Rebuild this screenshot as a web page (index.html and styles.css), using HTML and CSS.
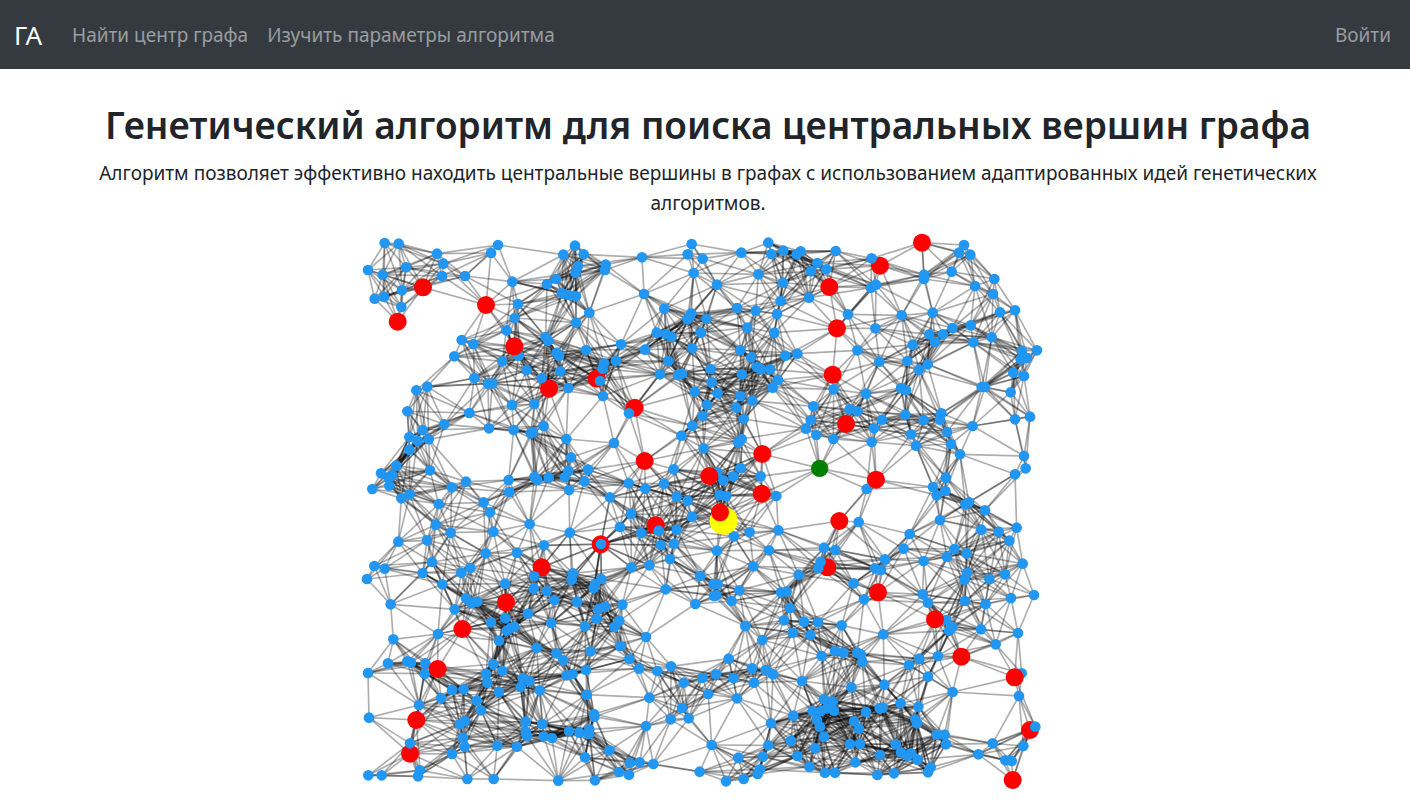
FILE: index.html
```html
<!DOCTYPE html>
<html lang="ru">
<head>
<meta charset="utf-8">
<meta name="viewport" content="width=device-width, initial-scale=1">
<title>Генетический алгоритм</title>
<link rel="stylesheet" href="styles.css">
</head>
<body>
<nav class="navbar">
  <a class="brand" href="#">ГА</a>
  <a class="nav-link" href="#">Найти центр графа</a>
  <a class="nav-link" href="#">Изучить параметры алгоритма</a>
  <a class="nav-link nav-login" href="#">Войти</a>
</nav>
<main class="intro">
  <h1 class="title">Генетический алгоритм для поиска центральных вершин графа</h1>
  <p class="lead">Алгоритм позволяет эффективно находить центральные вершины в графах с использованием адаптированных идей генетических алгоритмов.</p>
  <svg class="graph" id="graph" viewBox="0 0 2118 1680" role="img" aria-label="Граф"></svg>
</main>
<script src="graph.js"></script>
</body>
</html>
```
FILE: styles.css
```css
*, *::before, *::after { box-sizing: border-box; }
body {
  margin: 0;
  background: #fff;
  color: #212529;
  font-family: "Segoe UI", "Noto Sans", sans-serif;
  font-size: 19px;
  line-height: 30px;
}
.navbar {
  display: flex;
  align-items: center;
  gap: 19px;
  min-height: 69px;
  padding: 10px 19px 10px 14px;
  background: #343a40;
}
.brand {
  margin-right: 11px;
  color: #fff;
  font-size: 26px;
  text-decoration: none;
}
.nav-link {
  color: rgba(255, 255, 255, .5);
  text-decoration: none;
}
.nav-login { margin-left: auto; }
.intro {
  display: flex;
  flex-direction: column;
  align-items: center;
  max-width: 1236px;
  margin: 0 auto;
  padding: 32px 0 20px 6px;
  text-align: center;
}
.title {
  margin: 0 0 9px;
  font-size: 37px;
  font-weight: 600;
  line-height: 48px;
}
.lead { margin: 0; }
.graph {
  display: block;
  width: 100%;
  max-width: 706px;
  margin-top: 12px;
}
.edge {
  fill: none;
  stroke: #000;
  stroke-opacity: .32;
  stroke-width: 5;
}
.vertex { fill: #2196f3; }
.path { fill: #f00; }
.target { fill: #008000; }
.center { fill: #ff0; }
```
FILE: graph.js
```js
// Vertices by sector: [offset x, offset y, "x,y x,y ..."]
const sectors = [
  [0, 0, "89,39 131,41 246,71 265,101 153,112 261,138 330,138 39,120 83,134 141,181 87,200 59,206 139,231 429,45 408,69 472,155 489,222 479,264 454,301 491,377 320,330 355,342 298,379 442,394 515,420 560,444 358,444 399,461 412,460 217,470 184,481 157,544 343,549 471,525 538,522 640,474 616,424 605,368 612,378 572,321 580,332 663,278 703,248 576,162 603,147 621,190 641,195 663,199 669,108 662,128 686,73 625,74 660,47 693,360"],
  [705, 0, "47,104 45,120 156,82 162,192 223,236 305,42 293,73 338,86 311,129 381,164 454,68 535,38 544,72 580,62 632,64 620,73 682,99 663,124 505,133 579,158 657,203 572,213 561,252 441,234 497,242 553,308 472,293 350,267 304,250 292,268 299,260 333,308 307,355 200,308 228,312 245,321 235,393 165,359 93,343 78,392 42,400 38,416 30,453 39,498 210,433 264,434 276,431 362,417 365,457 314,485 383,490 351,525 338,558 117,550 451,360 484,382 456,433 501,411 512,417 540,418 564,450 548,473 451,498 487,512 439,533 586,377 622,371 670,529"],
  [1395, 0, "47,63 19,118 155,85 432,45 417,68 451,74 395,125 312,134 312,147 465,168 523,147 519,192 540,247 585,241 168,164 153,173 84,253 166,295 245,256 338,248 397,294 452,286 369,313 328,313 345,336 278,344 515,322 460,337 112,361 178,395 262,393 323,403 297,419 41,478 138,491 243,474 258,481 89,538 112,544 256,554 364,550 485,471 495,471 572,487 580,428 612,438 606,363 602,388 621,384 651,361"],
  [0, 555, "268,28 203,45 163,66 188,78 221,73 163,104 124,152 78,175 111,180 101,190 103,212 52,222 139,250 164,238 225,166 290,217 333,200 461,195 402,40 476,45 527,55 534,51 566,33 634,72 648,127 699,164 640,167 630,186 688,199 581,188 538,186 547,195 642,225 463,231 386,262 405,292 251,267 242,329 287,353 216,376 130,380 415,350 524,327 644,353 567,391 392,415 486,413 231,441 203,474 319,473 346,459 58,453 89,461 36,492 262,508 450,506 538,484 536,521 576,528 598,556 666,560 654,475 650,494 333,550 367,560"],
  [705, 555, "307,32 274,62 341,100 72,84 461,12 455,72 445,83 251,163 382,172 400,196 430,184 452,159 512,184 559,243 389,240 409,243 116,205 166,221 222,206 260,245 293,257 60,247 123,296 90,336 306,305 153,354 206,347 260,344 213,390 252,386 432,364 479,352 565,346 381,407 537,406 490,454 240,432 178,451 124,457 33,387 34,492 15,507 11,519 227,523 331,483 371,507 383,507 379,541 372,543 448,526 425,558 662,15 648,41 679,60 692,440 685,460 626,479 573,532 590,530"],
  [1395, 555, "162,40 40,72 155,81 186,14 311,15 360,14 273,58 288,92 381,51 393,87 458,33 420,118 585,13 630,5 612,123 617,160 585,178 378,188 339,216 350,241 376,228 436,268 447,262 495,286 140,222 116,321 360,315 269,357 251,401 195,433 12,398 46,405 165,460 183,465 311,438 381,426 403,402 440,415 484,344 536,350 590,338 568,377 608,446 555,478 508,492 441,474 434,494 101,505 132,553 308,538 435,558 573,549 642,540"],
  [0, 1110, "107,13 299,28 350,10 249,102 115,118 99,190 157,184 168,188 211,190 209,221 39,219 291,270 326,268 258,294 192,315 42,353 165,430 291,462 40,526 80,526 195,511 189,529 337,537 416,537 408,67 451,55 455,92 478,80 468,84 519,41 432,122 588,69 690,79 545,144 604,160 625,181 415,192 442,212 393,222 397,248 432,276 365,302 378,331 503,235 523,243 497,261 554,271 635,226 653,222 693,210 695,284 707,154 315,373 330,363 324,413 329,440 427,437 486,440 512,365 562,372 512,395 516,408 566,409 591,414 642,394 673,398 703,388 702,402 690,472 610,542"],
  [705, 1110, "97,14 45,20 26,27 20,56 88,62 73,81 91,138 168,111 118,177 147,206 202,213 243,199 281,248 337,234 378,223 430,234 416,176 486,205 492,248 527,210 549,223 466,78 517,120 355,282 441,295 276,324 296,355 242,358 178,293 168,378 12,342 13,350 58,451 120,488 149,487 190,492 87,516 117,524 15,541 365,435 329,515 408,544 461,537 445,473 519,470 535,436 543,370 510,508 503,522 316,12 582,61 600,24 642,65 684,67 608,98 661,105 695,168 636,243 610,347 668,333 702,297 693,333 681,360 690,380 702,410 603,422 675,445 622,468 658,500 705,518"],
  [1395, 1110, "65,76 190,103 45,153 70,158 112,158 122,163 127,185 94,262 193,254 267,195 298,176 354,168 324,230 379,60 388,92 397,81 324,8 483,88 497,12 527,133 594,99 398,276 605,220 597,288 646,380 610,438 518,430 475,463 556,481 575,483 295,320 242,310 179,325 188,323 138,336 38,305 20,325 42,332 102,364 117,386 90,432 120,432 106,487 45,518 172,525 222,520 180,465 227,433 243,457 263,467 273,460 293,479 286,358 291,370 350,404 374,404 378,433 332,502 324,517"]
];

// Highlighted vertices: [x, y, class, radius]; "back" ones lie under the ordinary vertices
const back = [
  [582, 476], [725, 446], [839, 533], [1575, 107], [560, 1012], [902, 886],
  [737, 943], [1417, 1012], [2025, 1500], [165, 1571]
].map(([x, y]) => [x, y, "path", 27]);

const front = [
  [1106, 872, "center", 42],
  [1394, 715, "target", 26],
  ...[
    [204, 172], [128, 275], [393, 225], [478, 349], [1423, 171], [1701, 38],
    [1446, 295], [1433, 434], [1473, 582], [453, 1117], [1222, 672], [869, 693],
    [1063, 738], [1220, 791], [1095, 847], [1563, 749], [1453, 873], [1569, 1087],
    [322, 1197], [248, 1317], [184, 1470], [1740, 1168], [1819, 1280],
    [1979, 1342], [1973, 1650]
  ].map(([x, y]) => [x, y, "path", 27])
];

const plain = sectors.flatMap(([ox, oy, list]) =>
  list.split(" ").map(pair => {
    const [x, y] = pair.split(",").map(Number);
    return [x + ox, y + oy, "vertex", 16];
  })
);

// Two vertices are joined when they are closer than the reach of the graph
const reachX = 201;
const reachY = 162;
const all = [...back, ...plain, ...front];
const svg = document.getElementById("graph");

function add(name, attributes) {
  const node = document.createElementNS("http://www.w3.org/2000/svg", name);
  for (const key in attributes) node.setAttribute(key, attributes[key]);
  svg.append(node);
}

all.forEach(([x1, y1], i) => {
  for (const [x2, y2] of all.slice(i + 1)) {
    if (Math.hypot((x2 - x1) / reachX, (y2 - y1) / reachY) <= 1) {
      add("line", { class: "edge", x1, y1, x2, y2 });
    }
  }
});

for (const [cx, cy, kind, r] of all) add("circle", { class: kind, cx, cy, r });
```
